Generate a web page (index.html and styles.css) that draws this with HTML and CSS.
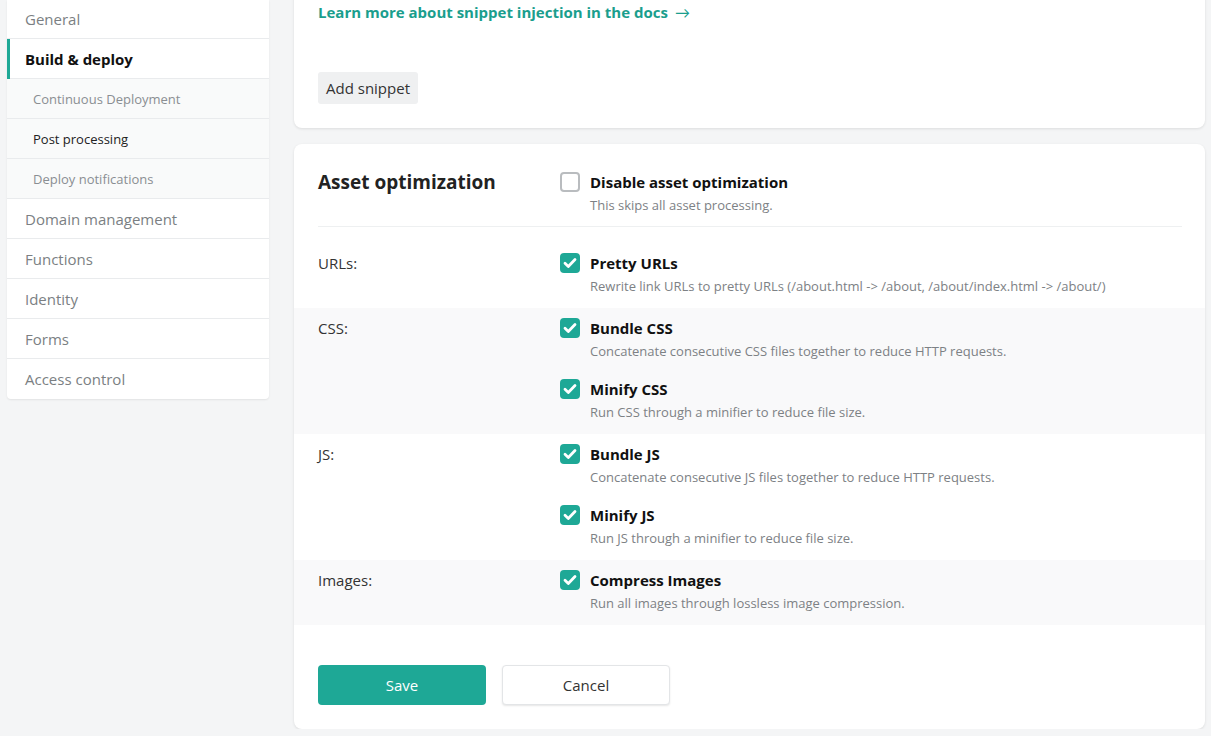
FILE: index.html
```html
<!DOCTYPE html>
<html lang="en">
<head>
<meta charset="utf-8">
<title>Build & deploy – Post processing</title>
<link rel="stylesheet" href="styles.css">
</head>
<body>
<div class="page">
  <nav class="sidebar">
    <a class="nav-item">General</a>
    <a class="nav-item active">Build &amp; deploy</a>
    <a class="nav-item sub">Continuous Deployment</a>
    <a class="nav-item sub current">Post processing</a>
    <a class="nav-item sub">Deploy notifications</a>
    <a class="nav-item">Domain management</a>
    <a class="nav-item">Functions</a>
    <a class="nav-item">Identity</a>
    <a class="nav-item">Forms</a>
    <a class="nav-item last">Access control</a>
  </nav>

  <main class="main">
    <section class="card snippet-card">
      <a class="docs-link">Learn more about snippet injection in the docs<span class="arrow">→</span></a>
      <button class="btn-light">Add snippet</button>
    </section>

    <section class="card asset-card">
      <div class="asset-head">
        <h2 class="asset-title">Asset optimization</h2>
        <div class="option">
          <span class="box"></span>
          <div class="option-text">
            <div class="option-title">Disable asset optimization</div>
            <div class="option-desc">This skips all asset processing.</div>
          </div>
        </div>
      </div>
      <div class="divider"></div>

      <div class="group first">
        <div class="group-label">URLs:</div>
        <div class="group-options">
          <div class="option">
            <span class="box checked"><svg viewBox="0 0 20 20"><path d="M5 10.3l3.3 3.2 6.7-6.9" /></svg></span>
            <div class="option-text">
              <div class="option-title">Pretty URLs</div>
              <div class="option-desc">Rewrite link URLs to pretty URLs (/about.html -&gt; /about, /about/index.html -&gt; /about/)</div>
            </div>
          </div>
        </div>
      </div>

      <div class="group shaded">
        <div class="group-label">CSS:</div>
        <div class="group-options">
          <div class="option">
            <span class="box checked"><svg viewBox="0 0 20 20"><path d="M5 10.3l3.3 3.2 6.7-6.9" /></svg></span>
            <div class="option-text">
              <div class="option-title">Bundle CSS</div>
              <div class="option-desc">Concatenate consecutive CSS files together to reduce HTTP requests.</div>
            </div>
          </div>
          <div class="option">
            <span class="box checked"><svg viewBox="0 0 20 20"><path d="M5 10.3l3.3 3.2 6.7-6.9" /></svg></span>
            <div class="option-text">
              <div class="option-title">Minify CSS</div>
              <div class="option-desc">Run CSS through a minifier to reduce file size.</div>
            </div>
          </div>
        </div>
      </div>

      <div class="group">
        <div class="group-label">JS:</div>
        <div class="group-options">
          <div class="option">
            <span class="box checked"><svg viewBox="0 0 20 20"><path d="M5 10.3l3.3 3.2 6.7-6.9" /></svg></span>
            <div class="option-text">
              <div class="option-title">Bundle JS</div>
              <div class="option-desc">Concatenate consecutive JS files together to reduce HTTP requests.</div>
            </div>
          </div>
          <div class="option">
            <span class="box checked"><svg viewBox="0 0 20 20"><path d="M5 10.3l3.3 3.2 6.7-6.9" /></svg></span>
            <div class="option-text">
              <div class="option-title">Minify JS</div>
              <div class="option-desc">Run JS through a minifier to reduce file size.</div>
            </div>
          </div>
        </div>
      </div>

      <div class="group shaded">
        <div class="group-label">Images:</div>
        <div class="group-options">
          <div class="option">
            <span class="box checked"><svg viewBox="0 0 20 20"><path d="M5 10.3l3.3 3.2 6.7-6.9" /></svg></span>
            <div class="option-text">
              <div class="option-title">Compress Images</div>
              <div class="option-desc">Run all images through lossless image compression.</div>
            </div>
          </div>
        </div>
      </div>

      <div class="actions">
        <button class="btn-primary">Save</button>
        <button class="btn-secondary">Cancel</button>
      </div>
    </section>
  </main>
</div>
</body>
</html>
```

FILE: styles.css
```css
* { box-sizing: border-box; }

html, body {
  margin: 0;
  padding: 0;
  background: #f4f5f6;
  font-family: "Open Sans", Lato, sans-serif;
  color: #222;
  overflow: hidden;
}

.page {
  display: flex;
  align-items: flex-start;
  gap: 25px;
  padding: 0 6px 0 7px;
}

/* Sidebar */
.sidebar {
  width: 262px;
  flex: none;
  margin-top: 0;
  background: #fff;
  border-radius: 0 0 4px 4px;
  box-shadow: 0 1px 2px rgba(0,0,0,0.08);
  display: flex;
  flex-direction: column;
}

.nav-item {
  display: flex;
  align-items: center;
  height: 40px;
  padding-left: 18px;
  border-bottom: 1px solid #e9ebed;
  font-size: 15px;
  color: #7b7f83;
  position: relative;
}

.nav-item:first-child { height: 39px; }

.nav-item.last { border-bottom: 0; }

.nav-item.active {
  font-weight: 700;
  color: #111;
}

.nav-item.active::before {
  content: "";
  position: absolute;
  left: 0;
  top: 0;
  bottom: -1px;
  width: 3px;
  background: #1ea896;
}

.nav-item.sub {
  background: #f9fafa;
  padding-left: 26px;
  font-size: 13px;
  color: #8a8e92;
}

.nav-item.sub.current { color: #222; }

/* Main */
.main {
  flex: 1;
  min-width: 0;
  margin-top: -30px;
  display: flex;
  flex-direction: column;
  gap: 16px;
}

.card {
  background: #fff;
  border-radius: 8px;
  box-shadow: 0 1px 3px rgba(0,0,0,0.1);
}

.snippet-card {
  padding: 32px 24px 24px;
  display: flex;
  flex-direction: column;
  align-items: flex-start;
}

.docs-link {
  font-size: 15px;
  line-height: 20px;
  font-weight: 700;
  color: #1a9e8d;
}

.docs-link .arrow {
  margin-left: 7px;
  font-weight: 400;
}

.btn-light {
  margin-top: 50px;
  height: 32px;
  padding: 0 8px;
  border: 0;
  border-radius: 3px;
  background: #eff0f1;
  font-family: inherit;
  font-size: 15px;
  color: #333;
}

.asset-card {
  padding: 28px 0 24px;
  display: flex;
  flex-direction: column;
}

.asset-head {
  display: flex;
  padding: 0 24px;
}

.asset-title {
  width: 242px;
  flex: none;
  margin: 0;
  font-size: 19px;
  line-height: 20px;
  font-weight: 700;
  color: #222;
}

.divider {
  margin: 11px 23px 0 24px;
  border-top: 1px solid #eef0f1;
}

.group {
  display: flex;
  padding: 10px 24px 12px;
}

.group.first { margin-top: 16px; }

.group.shaded { background: #f9f9fa; }

.group-label {
  width: 242px;
  flex: none;
  font-size: 15px;
  line-height: 20px;
  color: #333;
}

.group-options {
  display: flex;
  flex-direction: column;
  gap: 18px;
}

.option {
  display: flex;
  gap: 10px;
}

.box {
  width: 20px;
  height: 20px;
  flex: none;
  border: 2px solid #b9bcbf;
  border-radius: 4px;
  background: #fff;
}

.box.checked {
  border: 0;
  background: #1ea896;
}

.box svg {
  display: block;
  width: 20px;
  height: 20px;
  fill: none;
  stroke: #fff;
  stroke-width: 2.8;
  stroke-linecap: round;
  stroke-linejoin: round;
}

.option-title {
  font-size: 15px;
  line-height: 20px;
  font-weight: 700;
  color: #111;
}

.option-desc {
  margin-top: 3px;
  font-size: 13px;
  line-height: 20px;
  color: #7d8185;
}

.actions {
  display: flex;
  gap: 16px;
  padding: 40px 24px 0;
}

.btn-primary,
.btn-secondary {
  width: 168px;
  height: 40px;
  border-radius: 4px;
  font-family: inherit;
  font-size: 15px;
}

.btn-primary {
  border: 0;
  background: #1ea896;
  color: #fff;
}

.btn-secondary {
  border: 1px solid #e3e5e7;
  background: #fff;
  color: #333;
  box-shadow: 0 1px 2px rgba(0,0,0,0.1);
}
```
